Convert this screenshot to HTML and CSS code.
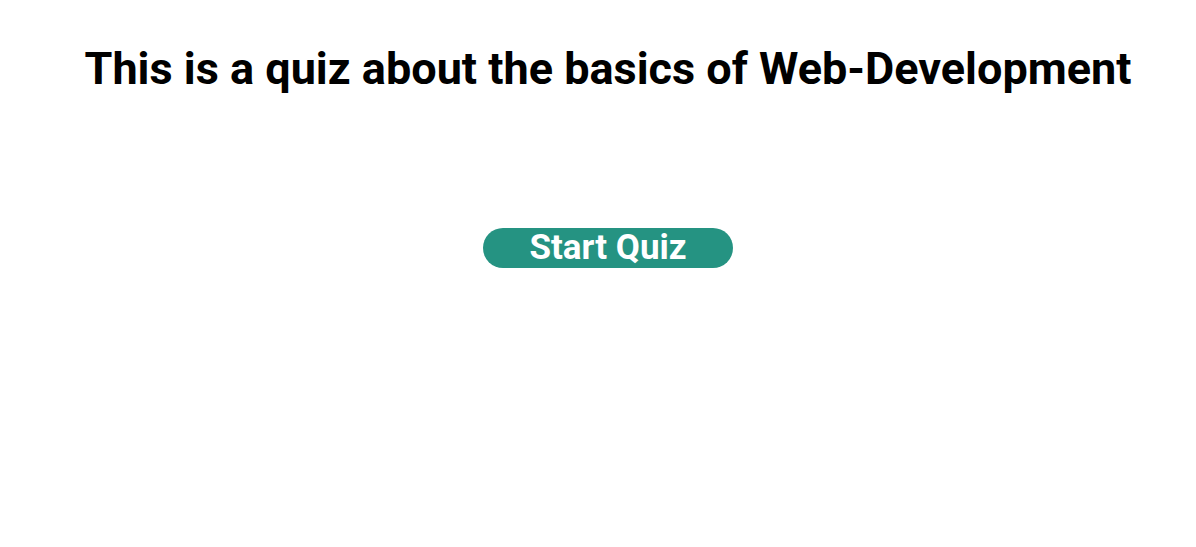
FILE: index.html
```html
<!DOCTYPE html>
<html>
<head>
<meta charset="utf-8">
<link rel="stylesheet" href="styles.css">
</head>
<body>
<main class="page">
  <h1 class="title">This is a quiz about the basics of Web-Development</h1>
  <div class="actions">
    <button class="start-btn">Start Quiz</button>
  </div>
</main>
</body>
</html>
```
FILE: styles.css
```css
html, body {
  margin: 0;
  padding: 0;
  background: #ffffff;
}
body {
  font-family: Roboto, "Liberation Sans", sans-serif;
  color: #000;
}
.page {
  padding-left: 20px;
  text-align: center;
}
.title {
  margin: 0;
  padding-top: 42px;
  font-size: 45px;
  font-weight: 700;
}
.actions {
  margin-top: 133px;
  display: flex;
  justify-content: center;
}
.start-btn {
  width: 250px;
  height: 40px;
  border: none;
  border-radius: 20px;
  background: #259382;
  color: #fff;
  font-family: Roboto, "Liberation Sans", sans-serif;
  font-weight: 700;
  font-size: 35px;
  line-height: 40px;
  padding: 0;
}
```
